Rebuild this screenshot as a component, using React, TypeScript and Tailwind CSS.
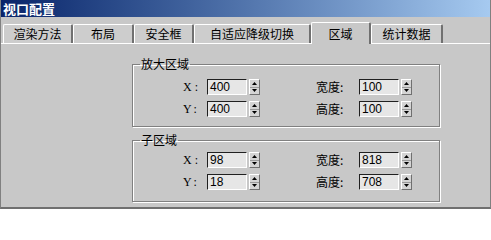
import type { ReactNode } from "react";

const cjk = "font-['Noto_Sans_CJK_SC','Noto_Sans',sans-serif]";

const tabs = [
  { label: "渲染方法", width: "w-[70px]" },
  { label: "布局", width: "w-[61px]" },
  { label: "安全框", width: "w-[60px]" },
  { label: "自适应降级切换", width: "w-[117px]" },
  { label: "区域", width: "w-[60px]", active: true },
  { label: "统计数据", width: "w-[72px]" },
];

function Spinner() {
  return (
    <div className="flex h-[16px] w-[11px] flex-col border border-t-white border-l-white border-r-[#707070] border-b-[#707070] bg-[#d4d4d4]">
      <div className="flex flex-1 items-center justify-center border-b border-[#9a9a9a]">
        <svg width="5" height="3" viewBox="0 0 5 3">
          <path d="M2.5 0 L5 3 L0 3 Z" fill="#000" />
        </svg>
      </div>
      <div className="flex flex-1 items-center justify-center">
        <svg width="5" height="3" viewBox="0 0 5 3">
          <path d="M0 0 L5 0 L2.5 3 Z" fill="#000" />
        </svg>
      </div>
    </div>
  );
}

function Field({ value }: { value: string }) {
  return (
    <div className="flex items-center gap-[2px]">
      <div className="h-[16px] w-[40px] border border-t-[#202020] border-l-[#202020] border-r-white border-b-white bg-[#e6e6e6] pl-[2px] font-['Liberation_Sans',sans-serif] text-[12px] leading-[14px] text-black">
        {value}
      </div>
      <Spinner />
    </div>
  );
}

function Row({ axis, axisValue, dim, dimValue }: { axis: string; axisValue: string; dim: string; dimValue: string }) {
  return (
    <div className="flex h-[16px] items-center pl-[50px]">
      <span className="w-[24px] font-['Liberation_Serif',serif] text-[12px] tracking-[3px] text-black">{axis}</span>
      <Field value={axisValue} />
      <span className={`ml-[56px] w-[43px] ${cjk} text-[12px] text-black`}>{dim}</span>
      <Field value={dimValue} />
    </div>
  );
}

function Group({ title, className, children }: { title: string; className: string; children: ReactNode }) {
  return (
    <fieldset
      className={`ml-[131px] w-[308px] border border-[#808080] shadow-[inset_1px_1px_0_white,1px_1px_0_white] ${className}`}
    >
      <legend className={`ml-[7px] px-[1px] ${cjk} text-[12px] leading-[14px] text-black`}>{title}</legend>
      {children}
    </fieldset>
  );
}

export default function App() {
  return (
    <div className="flex h-[209px] w-[491px] flex-col border-x border-b-2 border-x-[#808080] border-b-[#707070] bg-[#c8c8c8]">
      {/* Title bar */}
      <div className={`h-[17px] bg-gradient-to-r from-[#0a246a] to-[#a6caf0] pl-[2px] ${cjk} text-[13px] font-bold leading-[17px] text-white`}>
        视口配置
      </div>

      {/* Tabs */}
      <div className="flex h-[26px] items-end pl-[2px]">
        {tabs.map((tab) =>
          tab.active ? (
            <div
              key={tab.label}
              className={`relative z-10 -mb-px flex h-[22px] items-center justify-center rounded-t-[2px] border-l border-t border-r-2 border-l-white border-t-white border-r-[#707070] bg-[#c8c8c8] ${tab.width} ${cjk} text-[12px] text-black`}
            >
              {tab.label}
            </div>
          ) : (
            <div
              key={tab.label}
              className={`flex h-[19px] items-center justify-center rounded-t-[2px] border-l border-t border-r-2 border-l-white border-t-white border-r-[#707070] bg-[#cdcdcd] ${tab.width} ${cjk} text-[12px] text-black`}
            >
              {tab.label}
            </div>
          )
        )}
      </div>

      {/* Panel */}
      <div className="flex-1 border-t border-white pt-[13px]">
        <Group title="放大区域" className="pt-[8px] pb-[9px]">
          <div className="flex flex-col gap-[6px]">
            <Row axis="X:" axisValue="400" dim="宽度:" dimValue="100" />
            <Row axis="Y:" axisValue="400" dim="高度:" dimValue="100" />
          </div>
        </Group>
        <Group title="子区域" className="mt-[6px] pt-[5px] pb-[11px]">
          <div className="flex flex-col gap-[6px]">
            <Row axis="X:" axisValue="98" dim="宽度:" dimValue="818" />
            <Row axis="Y:" axisValue="18" dim="高度:" dimValue="708" />
          </div>
        </Group>
      </div>
    </div>
  );
}
